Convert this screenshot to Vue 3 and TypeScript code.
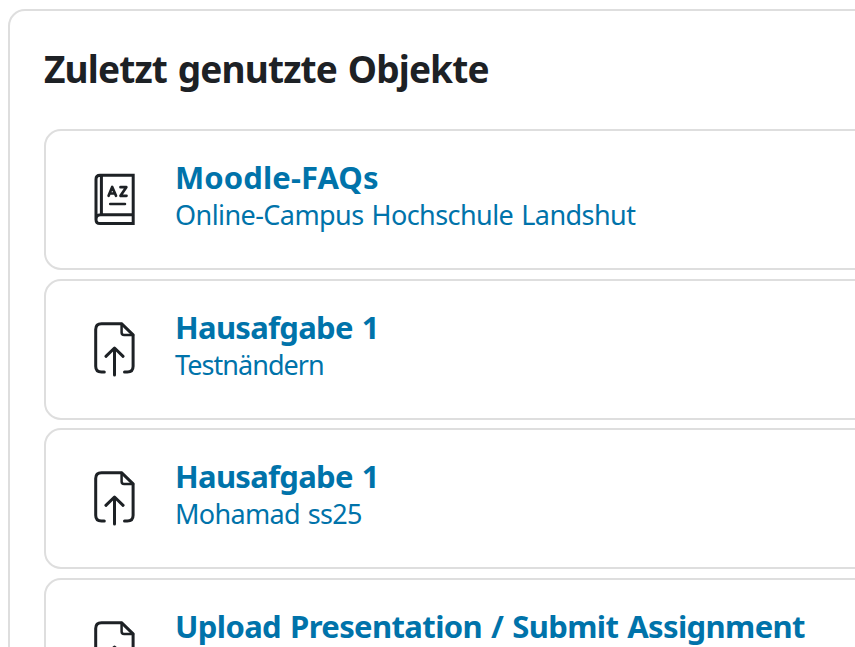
<script setup lang="ts">
interface RecentItem {
  title: string
  course: string
  kind: 'glossary' | 'assignment'
  size: string
}

const items: RecentItem[] = [
  { title: 'Moodle-FAQs', course: 'Online-Campus Hochschule Landshut', kind: 'glossary', size: 'faq' },
  { title: 'Hausafgabe 1', course: 'Testnändern', kind: 'assignment', size: 'first' },
  { title: 'Hausafgabe 1', course: 'Mohamad ss25', kind: 'assignment', size: 'second' },
  { title: 'Upload Presentation / Submit Assignment', course: '', kind: 'assignment', size: 'upload' },
]
</script>

<template>
  <main class="viewport">
    <section class="block">
      <h2 class="heading">Zuletzt genutzte Objekte</h2>
      <div class="list">
        <a v-for="(item, i) in items" :key="i" class="card" :class="item.size">
          <svg v-if="item.kind === 'glossary'" class="icon" viewBox="0 0 48 58" fill="none" stroke="#1d2125" stroke-width="3" stroke-linejoin="miter" stroke-linecap="round">
            <path d="M10 4.200H43.200V52.600H10Q6 52.600 6 48.500V8.200Q6 4.200 10 4.200ZM11.400 4.200V43.800M43.200 43.800H10.500Q6 43.800 6 48.500" />
            <path d="M20.200 32.900H35" stroke-width="2.500" />
            <path d="M18.600 24.800L22.200 16L26 24.800M20 22.500H24.600M30.500 16.200H36.300L30.500 24.800H36.500" stroke-width="2.700" stroke-linejoin="round" />
          </svg>
          <svg v-else class="icon" viewBox="0 0 48 58" fill="none" stroke="#1d2125" stroke-width="3" stroke-linejoin="round" stroke-linecap="round">
            <path d="M14.300 51H11.500Q5.700 51 5.700 45.200V8.500Q5.700 2.700 11.500 2.700H31.500L43.100 13.800V45.200Q43.100 51 37.300 51H34.500" />
            <path d="M31.600 3V11.500Q31.600 14 34.100 14H43.100" stroke-width="2.500" />
            <path d="M24.500 54V27.500M15.900 35.300L24.500 27L33.100 35.300" />
          </svg>
          <span class="text">
            <strong class="title">{{ item.title }}</strong>
            <span class="course">{{ item.course }}</span>
          </span>
        </a>
      </div>
    </section>
  </main>
</template>

<style>
body {
  margin: 0;
  background: #fff;
}
</style>

<style scoped>
.viewport {
  box-sizing: border-box;
  width: 855px;
  height: 647px;
  overflow: hidden;
  padding: 9px 0 0 8px;
  font-family: 'Noto Sans', 'Open Sans', sans-serif;
}
.block {
  box-sizing: border-box;
  width: 900px;
  height: 760px;
  padding: 33px 34px;
  border: 2px solid #dedede;
  border-radius: 17px;
}
.heading {
  margin: 0;
  height: 85px;
  font-size: 37px;
  line-height: 50px;
  font-weight: 700;
  letter-spacing: -0.850px;
  word-spacing: 2px;
  color: #1d2125;
  white-space: nowrap;
}
.list {
  display: flex;
  flex-direction: column;
  gap: 8.600px;
}
.card {
  box-sizing: border-box;
  flex: none;
  display: flex;
  height: 141px;
  padding: 27px 0 0 43px;
  border: 2px solid #dedede;
  border-radius: 17px;
}
.icon {
  flex: none;
  width: 48px;
  height: 58px;
  margin: 13px 37px 0 1px;
}
.text {
  display: flex;
  flex-direction: column;
  color: #0073aa;
  white-space: nowrap;
}
.title {
  font-size: 31px;
  line-height: 39px;
  font-weight: 700;
  letter-spacing: -0.620px;
  word-spacing: 1.500px;
}
.course {
  font-size: 27px;
  line-height: 36px;
  letter-spacing: -0.570px;
  word-spacing: 1.500px;
}
.faq .title {
  letter-spacing: 0.100px;
}
.first .title,
.second .title {
  letter-spacing: -0.700px;
}
.first .course {
  letter-spacing: -0.950px;
}
.second .course {
  letter-spacing: -0.680px;
}
</style>
